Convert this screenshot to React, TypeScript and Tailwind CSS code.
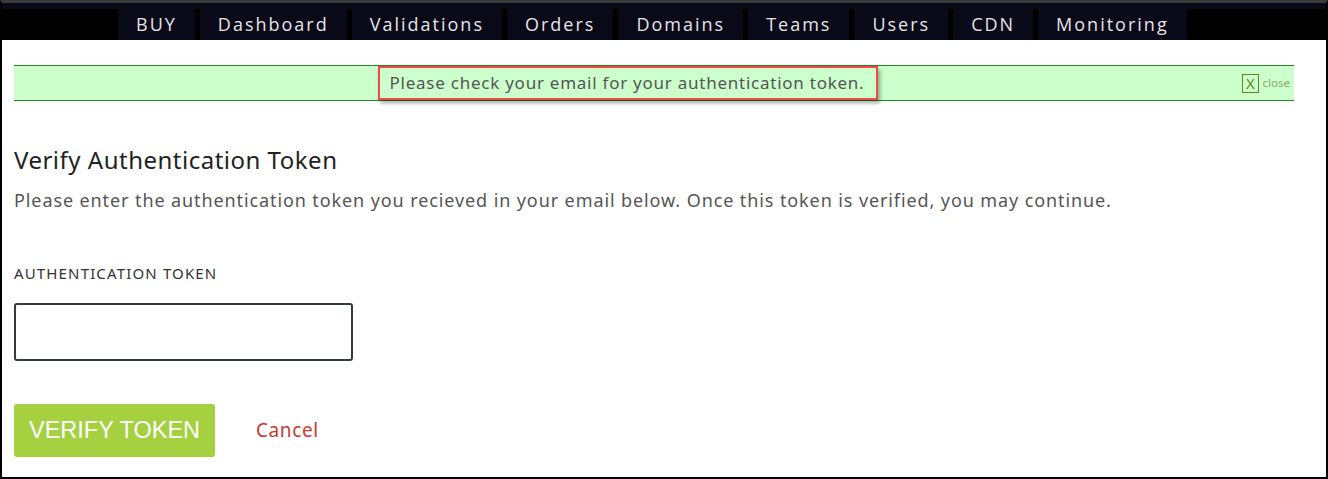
import React from "react";

const navItems = ["BUY", "Dashboard", "Validations", "Orders", "Domains", "Teams", "Users", "CDN", "Monitoring"];

export default function App() {
    return (
        <div className="w-[1328px] h-[479px] overflow-hidden bg-white border-x-2 border-b-2 border-black border-t-[3px] border-t-[#3a3a3a] font-['Noto_Sans',sans-serif]">
            {/* Top nav */}
            <nav className="bg-black">
                <div className="h-[6px] bg-[#0a0918]"/>
                <ul className="flex gap-[5px] pl-[116px]">
                    {navItems.map((item) => (
                        <li key={item}
                            className="h-[31px] px-[18px] flex items-center bg-[#0a0918] text-[#e4e4ea] text-[18px] tracking-[2px] font-['Open_Sans',sans-serif]">
                            {item}
                        </li>
                    ))}
                </ul>
            </nav>

            <div className="px-[12px]">
                {/* Alert */}
                <div className="mt-[25px] mr-[20px] h-[36px] pr-[4px] flex items-center bg-[#ccffcc] border-y border-[#1f8a1f]">
                    <div className="flex-1 flex justify-center">
                        <div className="pl-[10px] pr-[12px] h-[34px] flex items-center border-2 border-[#f0494b] shadow-[2px_3px_4px_rgba(0,0,0,0.35)]">
                            <span className="text-[17px] tracking-[0.75px] text-[#555]">
                                Please check your email for your authentication token.
                            </span>
                        </div>
                    </div>
                    <div className="w-[48px] flex items-center gap-[4px]">
                        <span className="w-[18px] h-[19px] border border-[#5e8a1e] text-[#5e8a1e] text-[15px] leading-none flex items-center justify-center">X</span>
                        <span className="text-[11.5px] text-[#8aa86a]">close</span>
                    </div>
                </div>

                {/* Form */}
                <h2 className="mt-[44px] text-[24px] leading-[30px] tracking-[0.5px] text-[#222]">Verify Authentication Token</h2>
                <p className="mt-[12px] text-[18px] leading-[26px] tracking-[0.9px] text-[#555]">
                    Please enter the authentication token you recieved in your email below. Once this token is verified, you may continue.
                </p>

                <label className="block mt-[50px] text-[15px] leading-[20px] tracking-[1.15px] text-[#333] uppercase">Authentication Token</label>
                <input type="text" className="block mt-[20px] w-[339px] h-[58px] border-2 border-[#333a45] rounded-[3px] outline-none"/>

                <div className="mt-[43px] flex items-center">
                    <button type="button"
                            className="w-[201px] h-[53px] bg-[#a5d03f] rounded-[3px] text-white text-[23.5px] font-['Liberation_Sans',sans-serif]">
                        VERIFY TOKEN
                    </button>
                    <a href="#" className="ml-[41px] text-[19px] tracking-[0.6px] text-[#c83a2e]">Cancel</a>
                </div>
            </div>
        </div>
    )
}
